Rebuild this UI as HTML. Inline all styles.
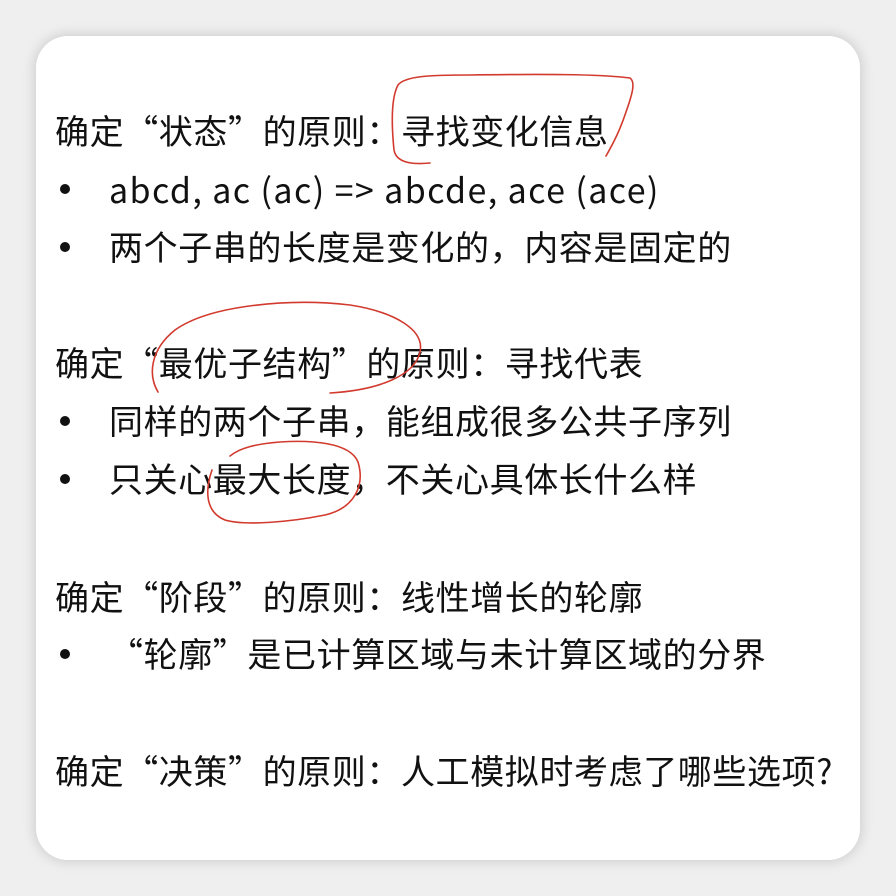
<!DOCTYPE html>
<html><head><meta charset="utf-8"><style>
html,body{margin:0;padding:0;width:896px;height:896px;background:#efefef;overflow:hidden}
.card{position:absolute;left:36px;top:36px;width:824px;height:824px;background:#fff;border-radius:32px;box-shadow:0 0 14px rgba(0,0,0,0.18)}
.t{position:absolute;font-family:"Noto Sans CJK SC","Liberation Sans",sans-serif;font-size:34px;color:#111;white-space:nowrap;line-height:40px;letter-spacing:0.6px}
.b{position:absolute;width:10px;height:10px;border-radius:50%;background:#111}
svg{position:absolute;left:0;top:0}
</style></head><body>
<div class="card"></div>
<div class="t" style="left:55px;top:110px">确定“状态”的原则：寻找变化信息</div>
<div class="b" style="left:60px;top:184px"></div>
<div class="t" style="left:109px;top:169px;letter-spacing:1.4px">abcd, ac (ac) =&gt; abcde, ace (ace)</div>
<div class="b" style="left:60px;top:242px"></div>
<div class="t" style="left:109px;top:226px">两个子串的长度是变化的，内容是固定的</div>
<div class="t" style="left:55px;top:342px">确定“最优子结构”的原则：寻找代表</div>
<div class="b" style="left:60px;top:416px"></div>
<div class="t" style="left:109px;top:400px">同样的两个子串，能组成很多公共子序列</div>
<div class="b" style="left:60px;top:474px"></div>
<div class="t" style="left:109px;top:458px">只关心最大长度，不关心具体长什么样</div>
<div class="t" style="left:55px;top:576px">确定“阶段”的原则：线性增长的轮廓</div>
<div class="b" style="left:60px;top:649px"></div>
<div class="t" style="left:109px;top:633px">“轮廓”是已计算区域与未计算区域的分界</div>
<div class="t" style="left:55px;top:750px">确定“决策”的原则：人工模拟时考虑了哪些选项?</div>
<svg width="896" height="896" fill="none" stroke="#d23a2e" stroke-width="1.6" stroke-linecap="round">
<path d="M430 163 C410 165 396 162 394 150 C392 130 390 100 398 85 C405 76 430 75 470 75 C540 74 600 74 630 78 C636 82 632 95 626 112 C620 130 614 142 606 156"/>
<path d="M158 392 C148 375 150 350 175 330 C210 305 290 298 350 305 C395 312 425 330 420 352 C415 375 380 390 330 393"/>
<path d="M212 470 C205 490 205 512 225 520 C245 526 290 522 325 515 C355 508 365 485 358 462 C350 442 310 440 280 442 C255 444 240 448 230 456"/>
</svg>
</body></html>
